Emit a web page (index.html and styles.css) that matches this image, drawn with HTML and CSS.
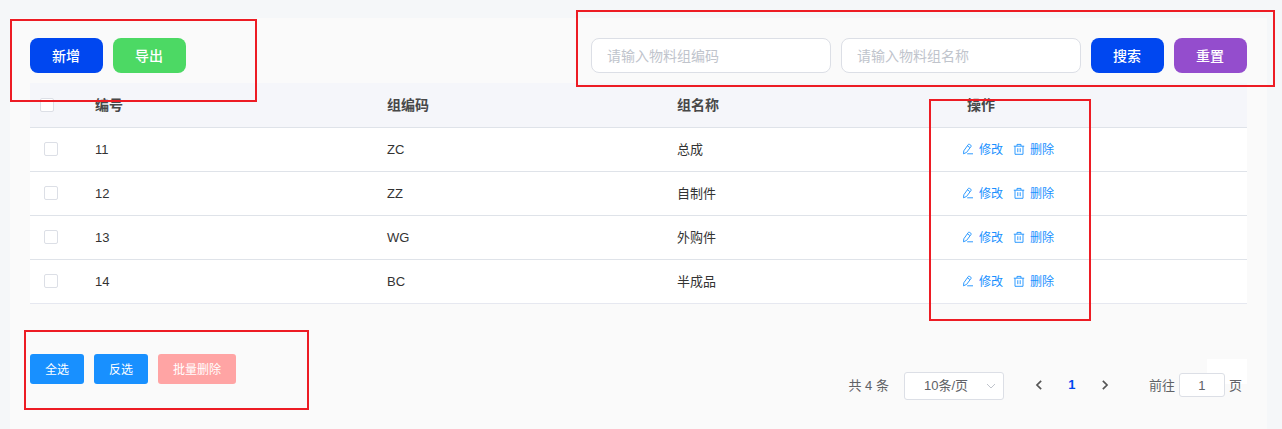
FILE: index.html
```html
<!DOCTYPE html>
<html lang="zh-CN">
<head>
  <meta charset="UTF-8">
  <meta name="viewport" content="width=device-width, initial-scale=1.0">
  <title>物料组</title>
  <link rel="stylesheet" href="styles.css">
</head>
<body>
  <svg class="icon-defs" width="0" height="0">
    <symbol id="icon-edit" viewBox="0 0 12 12">
      <path d="M1.5 10.8 1.8 7.8 6.3 1.5q.5-.6 1.1-.2l1.5 1q.6.5.2 1.1L4.6 9.4zM5.4 2.8l2.4 1.7M5.2 10.8h5.8" />
    </symbol>
    <symbol id="icon-delete" viewBox="0 0 12 12">
      <path d="M.8 3.2h10.4M4 3V1.4h4V3M2 3.2v8.1h8V3.2M4.8 5.2v4M7.2 5.2v4" />
    </symbol>
  </svg>

  <main class="panel">
    <div class="toolbar">
      <button class="btn btn-blue">新增</button>
      <button class="btn btn-green">导出</button>
      <div class="search">
        <input class="search-input" type="text" placeholder="请输入物料组编码">
        <input class="search-input" type="text" placeholder="请输入物料组名称">
        <button class="btn btn-blue">搜索</button>
        <button class="btn btn-purple">重置</button>
      </div>
    </div>

    <table class="table">
      <thead>
        <tr>
          <th class="col-check"><span class="checkbox"></span></th>
          <th class="col-id">编号</th>
          <th>组编码</th>
          <th>组名称</th>
          <th>操作</th>
        </tr>
      </thead>
      <tbody>
        <tr>
          <td class="col-check"><span class="checkbox"></span></td>
          <td>11</td>
          <td>ZC</td>
          <td>总成</td>
          <td class="col-action">
            <div class="actions">
              <a class="link"><svg class="icon"><use href="#icon-edit" /></svg>修改</a>
              <a class="link"><svg class="icon"><use href="#icon-delete" /></svg>删除</a>
            </div>
          </td>
        </tr>
        <tr>
          <td class="col-check"><span class="checkbox"></span></td>
          <td>12</td>
          <td>ZZ</td>
          <td>自制件</td>
          <td class="col-action">
            <div class="actions">
              <a class="link"><svg class="icon"><use href="#icon-edit" /></svg>修改</a>
              <a class="link"><svg class="icon"><use href="#icon-delete" /></svg>删除</a>
            </div>
          </td>
        </tr>
        <tr>
          <td class="col-check"><span class="checkbox"></span></td>
          <td>13</td>
          <td>WG</td>
          <td>外购件</td>
          <td class="col-action">
            <div class="actions">
              <a class="link"><svg class="icon"><use href="#icon-edit" /></svg>修改</a>
              <a class="link"><svg class="icon"><use href="#icon-delete" /></svg>删除</a>
            </div>
          </td>
        </tr>
        <tr>
          <td class="col-check"><span class="checkbox"></span></td>
          <td>14</td>
          <td>BC</td>
          <td>半成品</td>
          <td class="col-action">
            <div class="actions">
              <a class="link"><svg class="icon"><use href="#icon-edit" /></svg>修改</a>
              <a class="link"><svg class="icon"><use href="#icon-delete" /></svg>删除</a>
            </div>
          </td>
        </tr>
      </tbody>
    </table>

    <div class="footer">
      <div class="batch">
        <button class="btn-small">全选</button>
        <button class="btn-small">反选</button>
        <button class="btn-small btn-disabled">批量删除</button>
      </div>
      <div class="pagination">
        <span class="total">共 4 条</span>
        <div class="page-size">
          <span>10条/页</span>
          <svg class="caret" viewBox="0 0 10 10"><path d="M1 3l4 4 4-4" /></svg>
        </div>
        <svg class="arrow" viewBox="0 0 10 10"><path d="M6.8 1.5L3.3 5l3.5 3.5" /></svg>
        <span class="page-current">1</span>
        <svg class="arrow" viewBox="0 0 10 10"><path d="M3.2 1.5L6.7 5 3.2 8.5" /></svg>
        <div class="jump">
          <span>前往</span>
          <input class="jump-input" type="text" value="1">
          <span>页</span>
        </div>
      </div>
    </div>
  </main>

  <!-- highlighted areas -->
  <div class="mark mark-add"></div>
  <div class="mark mark-search"></div>
  <div class="mark mark-action"></div>
  <div class="mark mark-batch"></div>
</body>
</html>
```
FILE: styles.css
```css
* { box-sizing: border-box; }
body {
  margin: 0;
  padding: 18px 15px 0 10px;
  height: 429px;
  overflow: hidden;
  background: #f5f7f9;
  color: #333;
  font-family: "Liberation Sans", "Noto Sans CJK SC", sans-serif;
  font-size: 13px;
}
button, input { font-family: inherit; margin: 0; }
.icon-defs { position: absolute; }
.panel {
  height: 411px;
  padding: 20px 20px 0;
  background: #fafafa;
}

/* toolbar */
.toolbar { display: flex; gap: 10px; height: 45px; }
.search { display: flex; gap: 10px; margin-left: auto; }
.btn {
  width: 73px;
  height: 35px;
  padding: 0 1px 2px 0;
  border: none;
  border-radius: 8px;
  color: #fff;
  font-size: 14px;
  font-weight: 500;
}
.btn-blue { background: #0047f0; }
.btn-green { background: #4cd964; }
.btn-purple { background: #944dcd; }
.search-input {
  width: 240px;
  height: 35px;
  padding: 0 15px;
  border: 1px solid #dcdfe6;
  border-radius: 8px;
  background: #fff;
  font-size: 14px;
}
.search-input::placeholder { color: #c0c4cc; }

/* table */
.table {
  width: 100%;
  table-layout: fixed;
  border-collapse: separate;
  border-spacing: 0;
  background: #fff;
}
.table th, .table td {
  height: 44px;
  padding: 0 10px;
  border-bottom: 1px solid #dfe3e9;
  text-align: left;
  line-height: 20px;
}
.table th {
  height: 45px;
  background: #f5f6fa;
  color: #484848;
  font-size: 14px;
}
.table tr:last-child td { border-bottom-color: #e6e8f0; }
.table .col-check { width: 55px; }
.table td.col-check { padding: 0 0 1px 14px; }
.table .col-id { width: 292px; }
.table td.col-action { padding-left: 5px; }
.checkbox {
  display: block;
  width: 14px;
  height: 14px;
  border: 1px solid #dcdfe6;
  border-radius: 2px;
  background: #fff;
}
.actions { display: flex; gap: 10px; }
.link {
  display: flex;
  align-items: center;
  gap: 5px;
  color: #1890ff;
  font-size: 12px;
}
.icon {
  width: 12px;
  height: 12px;
  margin-bottom: 1px;
  fill: none;
  stroke: #1890ff;
  stroke-width: 0.9;
}

/* footer */
.footer {
  display: flex;
  justify-content: space-between;
  padding-top: 50px;
}
.batch { display: flex; gap: 10px; }
.btn-small {
  height: 30px;
  padding: 0 15px 2px;
  border: none;
  border-radius: 3px;
  background: #1890ff;
  color: #fff;
  font-size: 12px;
}
.btn-disabled { background: #ffa4a4; }
.pagination {
  display: flex;
  align-items: center;
  height: 28px;
  margin-top: 18px;
  color: #606266;
}
.pagination span { padding-bottom: 3px; }
.total { margin-right: 15px; }
.page-size {
  display: flex;
  align-items: center;
  justify-content: space-between;
  width: 100px;
  height: 28px;
  margin-right: 29px;
  padding: 0 7px 0 19px;
  border: 1px solid #dcdfe6;
  border-radius: 3px;
  background: #fff;
}
.caret {
  width: 10px;
  height: 10px;
  fill: none;
  stroke: #c0c4cc;
}
.arrow {
  width: 12px;
  height: 12px;
  margin-bottom: 3px;
  fill: none;
  stroke: #555;
  stroke-width: 1.4;
}
.page-current {
  width: 54px;
  color: #0047f0;
  font-weight: bold;
  text-align: center;
}
/* white patch behind the page jumper */
.jump {
  display: flex;
  align-items: center;
  height: 52px;
  margin: 0 0 2px 38px;
  padding-right: 5px;
  background: linear-gradient(#fff, #fff) right top / 40px 25px no-repeat;
}
.jump span { padding-bottom: 2px; }
.jump-input {
  width: 46px;
  height: 24px;
  margin: 0 4px;
  padding: 0;
  border: 1px solid #dcdfe6;
  border-radius: 3px;
  background: #fff;
  color: #606266;
  font-size: 13px;
  text-align: center;
}

/* marks */
.mark { position: absolute; border: 2px solid #ed1c24; }
.mark-add { left: 10px; top: 19px; width: 247px; height: 83px; }
.mark-search { left: 576px; top: 10px; width: 699px; height: 77px; }
.mark-action { left: 929px; top: 99px; width: 162px; height: 222px; }
.mark-batch { left: 24px; top: 330px; width: 285px; height: 80px; }
```
